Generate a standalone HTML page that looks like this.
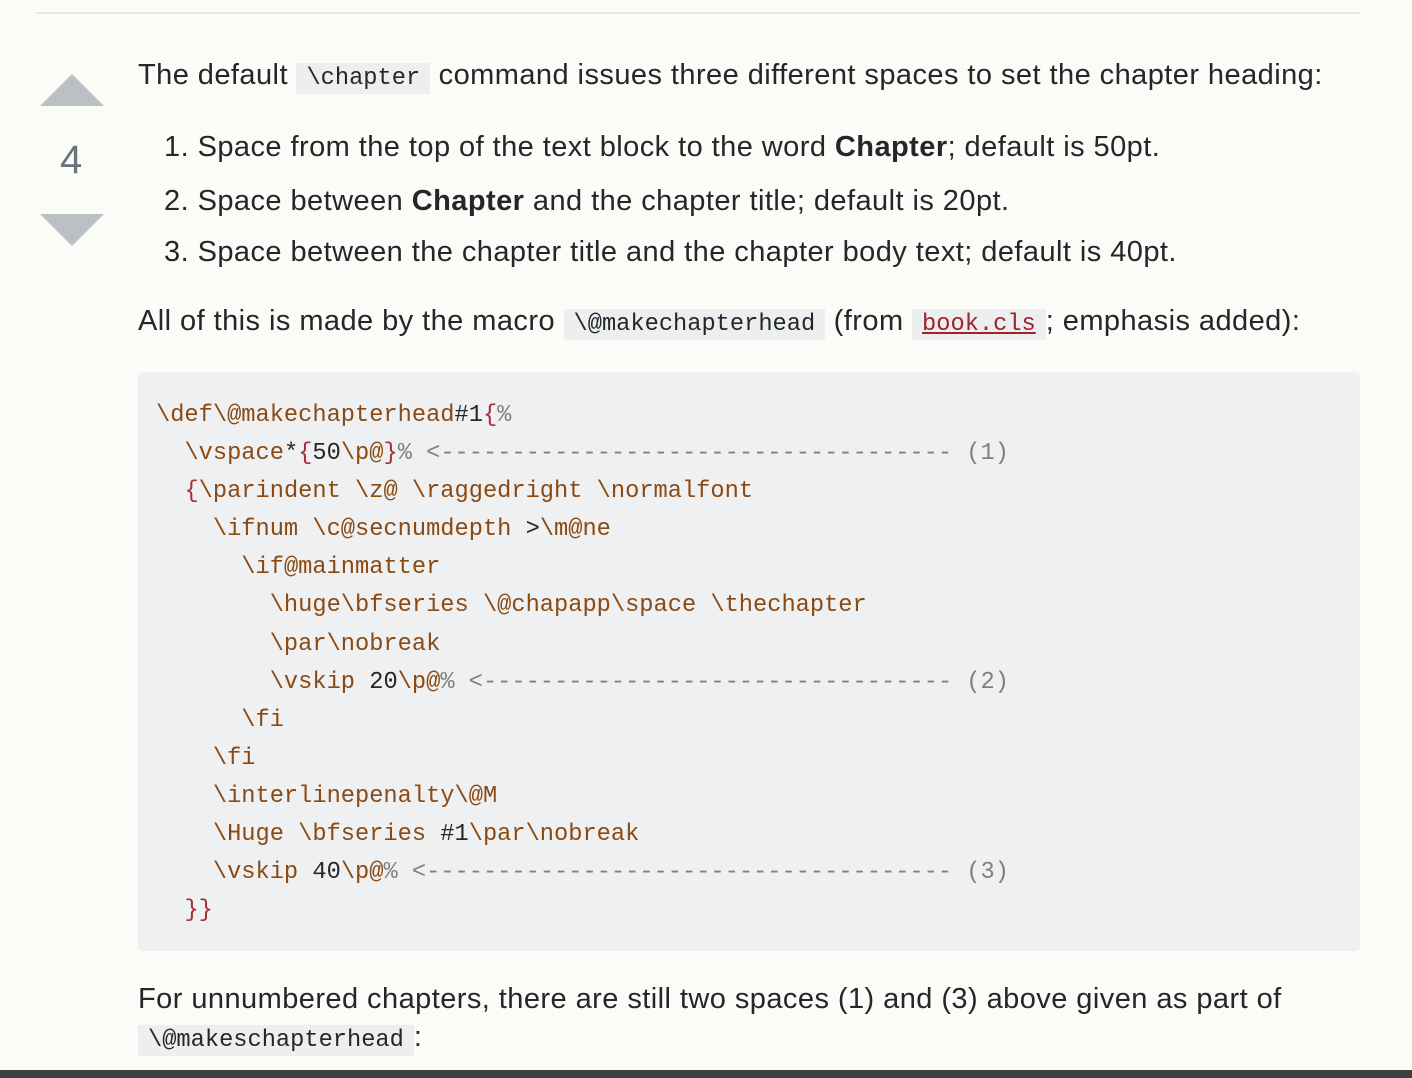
<!DOCTYPE html>
<html><head><meta charset="utf-8"><style>
body{margin:0;width:1412px;height:1078px;background:#fbfbf8;position:relative;overflow:hidden;font-family:"Liberation Sans",sans-serif;color:#242729;}
.a{position:absolute;white-space:pre;}
.t{font-size:29px;line-height:34px;letter-spacing:0.44px;}
code,.c{font-family:"Liberation Mono",monospace;font-size:23.7px;letter-spacing:0;}
code{background:#eceef0;padding:2px 10px;}
.k{color:#8a4a13}.r{color:#a3303b}.g{color:#808080}.d{color:#242729}
b{font-weight:bold}
</style></head><body>
<div class="a" style="left:36px;top:12px;width:1324px;height:2px;background:#e4e6e8"></div>
<div class="a" style="left:40px;top:74px;width:0;height:0;border-left:32px solid transparent;border-right:32px solid transparent;border-bottom:32px solid #bbc0c4"></div>
<div class="a" style="left:60px;top:138px;font-size:40px;color:#6a737c;line-height:44px">4</div>
<div class="a" style="left:40px;top:214px;width:0;height:0;border-left:32px solid transparent;border-right:32px solid transparent;border-top:32px solid #bbc0c4"></div>

<div class="a t" style="left:138px;top:58px">The default <code>\chapter</code> command issues three different spaces to set the chapter heading:</div>
<div class="a t" style="left:164px;top:130px">1. Space from the top of the text block to the word <b>Chapter</b>; default is 50pt.</div>
<div class="a t" style="left:164px;top:184px">2. Space between <b>Chapter</b> and the chapter title; default is 20pt.</div>
<div class="a t" style="left:164px;top:235px">3. Space between the chapter title and the chapter body text; default is 40pt.</div>
<div class="a t" style="left:138px;top:304px">All of this is made by the macro <code>\@makechapterhead</code> (from <code style="color:#a0222b;text-decoration:underline">book.cls</code>; emphasis added):</div>

<div class="a" style="left:138px;top:372px;width:1222px;height:579px;background:#eff0f1;border-radius:5px"></div>
<div class="a c" style="left:156px;top:397px;line-height:38.1px"><span class="k">\def\@makechapterhead</span><span class="d">#1</span><span class="r">{</span><span class="g">%</span>
  <span class="k">\vspace</span><span class="d">*</span><span class="r">{</span><span class="d">50</span><span class="k">\p@</span><span class="r">}</span><span class="g">% &lt;------------------------------------ (1)</span>
  <span class="r">{</span><span class="k">\parindent \z@ \raggedright \normalfont</span>
    <span class="k">\ifnum \c@secnumdepth </span><span class="d">&gt;</span><span class="k">\m@ne</span>
      <span class="k">\if@mainmatter</span>
        <span class="k">\huge\bfseries \@chapapp\space \thechapter</span>
        <span class="k">\par\nobreak</span>
        <span class="k">\vskip </span><span class="d">20</span><span class="k">\p@</span><span class="g">% &lt;--------------------------------- (2)</span>
      <span class="k">\fi</span>
    <span class="k">\fi</span>
    <span class="k">\interlinepenalty\@M</span>
    <span class="k">\Huge \bfseries </span><span class="d">#1</span><span class="k">\par\nobreak</span>
    <span class="k">\vskip </span><span class="d">40</span><span class="k">\p@</span><span class="g">% &lt;------------------------------------- (3)</span>
  <span class="r">}}</span></div>

<div class="a t" style="left:138px;top:982px">For unnumbered chapters, there are still two spaces (1) and (3) above given as part of</div>
<div class="a t" style="left:138px;top:1020px"><code>\@makeschapterhead</code>:</div>
<div class="a" style="left:0;top:1070px;width:1412px;height:8px;background:#3b4045"></div>
</body></html>
